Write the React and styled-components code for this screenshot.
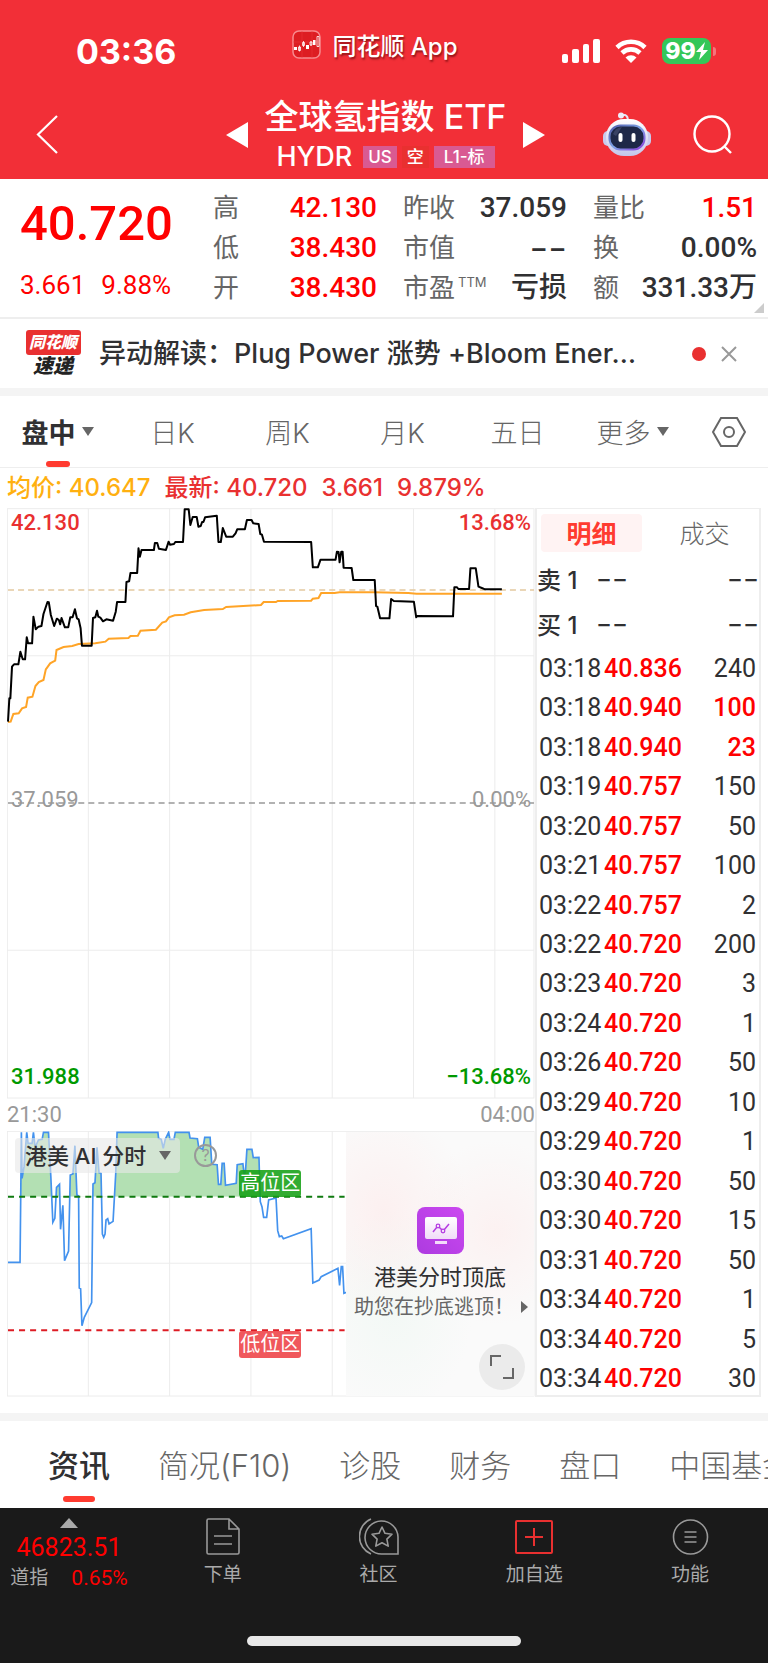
import React, { useState } from "react";
import styled, { createGlobalStyle, ThemeProvider } from "styled-components";

const theme = {
  brand: "#f22f37",
  accent: "#ff3b30",
  up: "#ff0000",
  upSoft: "#e93030",
  down: "#009900",
  ink: "#303032",
  muted: "#666666",
  faint: "#999999",
  line: "#eeeeee",
  band: "#f4f4f4",
  average: "#ffb010",
  bar: "#1a1a1a",
  text: '"Inter", "Noto Sans CJK SC", sans-serif',
  digits: '"Roboto", "Noto Sans CJK SC", sans-serif',
};

const GlobalStyle = createGlobalStyle`
  * { box-sizing: border-box; }
  body {
    margin: 0;
    background: #fff;
    font-family: ${theme.text};
    color: ${theme.ink};
    overflow-x: hidden;
  }
  button, select {
    margin: 0;
    padding: 0;
    border: 0;
    background: none;
    font: inherit;
    color: inherit;
    white-space: nowrap;
  }
  svg { display: block; flex-shrink: 0; }
  dl, dd, dt, h1, p { margin: 0; }
`;

/* ---------- header ---------- */

const Header = styled.header`
  background: ${props => props.theme.brand};
  color: #fff;
`;

const StatusBar = styled.div`
  display: grid;
  grid-template-columns: 1fr auto 1fr;
  align-items: center;
  height: 90px;
  padding: 12px 52px 0 34px;
`;

const Clock = styled.time`
  padding-left: 42px;
  font-size: 34px;
  font-weight: 700;
`;

const AppChip = styled.div`
  display: flex;
  align-items: center;
  gap: 11px;
  padding-bottom: 14px;
  font-size: 24px;
  font-weight: 500;
  text-shadow: 1px 2px 2px rgba(80, 0, 0, 0.6);
`;

const StatusIcons = styled.div`
  display: flex;
  justify-content: flex-end;
  align-items: center;
  gap: 15px;
`;

const Battery = styled.div`
  display: flex;
  align-items: center;
  gap: 2px;
`;

const BatteryLevel = styled.span`
  display: flex;
  align-items: center;
  justify-content: center;
  width: 49px;
  height: 26px;
  border-radius: 8px;
  background: #34c759;
  font-size: 23px;
  font-weight: 800;
`;

const BatteryTip = styled.span`
  width: 3px;
  height: 9px;
  border-radius: 0 3px 3px 0;
  background: #f5757b;
`;

const NavBar = styled.div`
  display: grid;
  grid-template-columns: 1fr auto 1fr;
  align-items: center;
  height: 89px;
  padding: 0 36px;
`;

const TitleGroup = styled.div`
  display: flex;
  align-items: center;
  gap: 17px;
  padding-left: 3px;
`;

const Title = styled.h1`
  font-size: 34px;
  font-weight: 500;
  line-height: 46px;
  text-align: center;
  white-space: nowrap;
`;

const SubTitle = styled.div`
  display: flex;
  align-items: center;
  justify-content: center;
  gap: 5px;
  height: 36px;
  padding-bottom: 2px;
  font-size: 27px;
  font-weight: 500;
`;

const Tag = styled.span`
  padding: 0 ${props => (props.$wide ? "10px" : "5px")};
  background: ${props => (props.$plain ? "#e93030" : "#d95a92")};
  font-size: 17px;
  line-height: 22px;
`;

const Code = styled.span`
  padding-right: 6px;
`;

const NavActions = styled.div`
  display: flex;
  justify-content: flex-end;
  align-items: center;
  gap: 42px;
`;

/* ---------- quote ---------- */

const Quote = styled.section`
  position: relative;
  display: grid;
  grid-template-columns: 167px repeat(3, 1fr);
  gap: 26px;
  height: 140px;
  padding: 9px 11px 0 20px;
  border-bottom: 2px solid ${props => props.theme.line};
`;

const Price = styled.div`
  font-family: ${props => props.theme.digits};
  font-size: 49px;
  font-weight: 500;
  line-height: 72px;
  color: ${props => props.theme.up};
`;

const Change = styled.div`
  display: flex;
  gap: 16px;
  font-family: ${props => props.theme.digits};
  font-size: 26px;
  line-height: 50px;
  color: ${props => props.theme.up};
`;

const Facts = styled.dl`
  min-width: 0;
`;

const Fact = styled.div`
  display: flex;
  justify-content: space-between;
  line-height: 40px;
  white-space: nowrap;

  dt {
    font-size: 26px;
    color: ${props => props.theme.muted};
  }
  dd {
    font-family: ${props => (props.$empty ? props.theme.text : props.theme.digits)};
    font-size: 28px;
    font-weight: 500;
    color: ${props => (props.$up ? props.theme.up : props.theme.ink)};
  }
  sup {
    padding-left: 3px;
    font-size: 13px;
    line-height: 13px;
  }
`;

const Corner = styled.span`
  position: absolute;
  right: 4px;
  bottom: 4px;
  border-left: 10px solid transparent;
  border-bottom: 10px solid #ccc;
`;

/* ---------- news ---------- */

const News = styled.section`
  display: flex;
  align-items: center;
  height: 77px;
  padding: 0 31px 0 24px;
  border-bottom: 8px solid ${props => props.theme.band};
`;

const NewsLogo = styled.div`
  display: flex;
  flex-direction: column;
  align-items: center;
  width: 58px;
  font-style: italic;
  font-weight: 900;
  color: #222;
  font-size: 20px;
  line-height: 22px;
`;

const NewsBadge = styled.span`
  width: 55px;
  border-radius: 3px;
  background: ${props => props.theme.upSoft};
  color: #fff;
  font-size: 16px;
  line-height: 25px;
  text-align: center;
`;

const NewsText = styled.a`
  flex: 1;
  min-width: 0;
  padding: 0 0 4px 17px;
  color: inherit;
  font-size: 27px;
  font-weight: 500;
  text-decoration: none;
  white-space: nowrap;
`;

const Dot = styled.span`
  width: 14px;
  height: 14px;
  margin-right: 15px;
  border-radius: 50%;
  background: ${props => props.theme.upSoft};
`;

/* ---------- period tabs ---------- */

const Periods = styled.nav`
  display: grid;
  grid-template-columns: repeat(6, 1fr) 78px;
  height: 72px;
  border-bottom: 1px solid ${props => props.theme.line};
`;

const Period = styled.button`
  position: relative;
  display: flex;
  align-items: center;
  justify-content: center;
  gap: 6px;
  color: ${props => (props.$active ? props.theme.ink : props.theme.muted)};
  font-size: 27px;
  font-weight: ${props => (props.$active ? 700 : 300)};

  &::after {
    content: "";
    display: ${props => (props.$active ? "block" : "none")};
    position: absolute;
    left: 40%;
    bottom: 0;
    width: 24px;
    height: 6px;
    border-radius: 3px;
    background: ${props => props.theme.accent};
  }
`;

const Summary = styled.div`
  display: flex;
  gap: 14px;
  height: 40px;
  padding: 0 7px;
  font-size: 24px;
  font-weight: 500;
  line-height: 40px;
  color: ${props => props.theme.upSoft};
`;

const Average = styled.span`
  color: ${props => props.theme.average};
`;

/* ---------- charts ---------- */

const Market = styled.main`
  display: flex;
  height: 913px;
  padding: 0 7px;
  border-bottom: 8px solid ${props => props.theme.band};
`;

const Charts = styled.div`
  flex: 1;
  min-width: 0;
`;

const Plot = styled.div`
  position: relative;
  height: ${props => props.$height};

  > svg {
    width: 100%;
    height: 100%;
  }
`;

const Label = styled.span`
  position: absolute;
  ${props => props.$side}: 4px;
  ${props => props.$at};
  font-family: ${props => props.theme.digits};
  font-size: 22px;
  font-weight: ${props => (props.$tone === "faint" ? 400 : 500)};
  line-height: 28px;
  color: ${props => props.theme[props.$tone]};
`;

const TimeAxis = styled.div`
  display: flex;
  justify-content: space-between;
  height: 32px;
  font-family: ${props => props.theme.digits};
  font-size: 22px;
  line-height: 32px;
  color: ${props => props.theme.faint};
`;

const Picker = styled.label`
  position: absolute;
  left: 8px;
  top: 7px;
  display: flex;
  align-items: center;
  width: 165px;
  height: 35px;
  padding: 0 9px 0 10px;
  border-radius: 4px;
  background: rgba(232, 232, 232, 0.6);
  font-size: 22px;
  font-weight: 500;

  select {
    flex: 1;
    appearance: none;
    outline: none;
  }
`;

const Help = styled.button`
  position: absolute;
  left: 187px;
  top: 13px;
  width: 23px;
  height: 23px;
  border: 2px solid ${props => props.theme.faint};
  border-radius: 50%;
  color: ${props => props.theme.faint};
  font-size: 16px;
  line-height: 19px;
`;

const Zone = styled.span`
  position: absolute;
  left: 44%;
  top: ${props => props.$top};
  width: 62px;
  border-radius: 3px;
  background: ${props => (props.$high ? "rgba(20, 160, 20, 0.87)" : "rgba(238, 70, 74, 0.9)")};
  color: #fff;
  font-size: 20px;
  line-height: 27px;
  text-align: center;
`;

const Promo = styled.aside`
  position: absolute;
  top: 1px;
  right: 1px;
  bottom: 1px;
  display: flex;
  flex-direction: column;
  align-items: center;
  width: 188px;
  padding-top: 75px;
  background:
    radial-gradient(ellipse at 20% 30%, rgba(255, 228, 228, 0.45), transparent 40%),
    radial-gradient(ellipse at 80% 38%, rgba(255, 228, 228, 0.4), transparent 40%),
    radial-gradient(ellipse at 25% 68%, rgba(232, 246, 238, 0.4), transparent 40%),
    #fafafa;
`;

const PromoTitle = styled.p`
  padding-top: 6px;
  font-size: 22px;
  line-height: 34px;
`;

const PromoLink = styled.a`
  display: flex;
  align-items: center;
  justify-content: space-between;
  align-self: stretch;
  padding: 0 6px 0 8px;
  color: ${props => props.theme.muted};
  font-size: 20px;
  line-height: 26px;
  text-decoration: none;
  white-space: nowrap;
`;

const Expand = styled.button`
  position: absolute;
  right: 9px;
  bottom: 6px;
  display: grid;
  place-items: center;
  width: 46px;
  height: 46px;
  border-radius: 50%;
  background: #ebebeb;
`;

/* ---------- trades ---------- */

const Trades = styled.div`
  width: 226px;
  height: 889px;
  border: 2px solid ${props => props.theme.line};
  border-top-width: 1px;
`;

const TradeTabs = styled.div`
  display: flex;
  gap: 12px;
  padding: 5px 4px;
`;

const TradeTab = styled.button`
  flex: 1;
  height: 38px;
  padding-bottom: 4px;
  border-radius: 4px;
  background: ${props => (props.$active ? "#fff3f3" : "transparent")};
  color: ${props => (props.$active ? props.theme.accent : props.theme.muted)};
  font-size: 25px;
  font-weight: ${props => (props.$active ? 700 : 300)};
`;

const Book = styled.table`
  width: 100%;
  border-collapse: collapse;
  font-size: 24px;
  font-weight: 500;

  td {
    height: 45px;
    padding: 0 0 2px;
  }
  td:first-child {
    width: 59px;
  }
  td:last-child {
    text-align: right;
  }
`;

const Ticks = styled.table`
  width: 100%;
  height: 750px;
  border-collapse: collapse;
  font-family: ${props => props.theme.digits};
  font-size: 25px;
  line-height: 30px;

  td {
    padding: 4px 0 0;
  }
  td:first-child {
    width: 67px;
    padding-left: 2px;
  }
  td:last-child {
    padding-right: 3px;
    text-align: right;
  }
`;

const Deal = styled.td`
  color: ${props => props.theme.up};
  font-weight: 500;
`;

const Volume = styled.td`
  color: ${props => (props.$up ? props.theme.up : props.theme.ink)};
  font-weight: ${props => (props.$up ? 500 : 400)};
`;

/* ---------- bottom ---------- */

const Sections = styled.nav`
  display: flex;
  gap: 48px;
  height: 87px;
  padding-left: 48px;
  overflow: hidden;
`;

const Section = styled.button`
  position: relative;
  flex-shrink: 0;
  padding-bottom: 3px;
  color: ${props => (props.$active ? props.theme.ink : props.theme.muted)};
  font-size: 31px;
  font-weight: ${props => (props.$active ? 500 : 300)};

  &::after {
    content: "";
    display: ${props => (props.$active ? "block" : "none")};
    position: absolute;
    left: 15px;
    bottom: 6px;
    width: 32px;
    height: 6px;
    border-radius: 3px;
    background: ${props => props.theme.accent};
  }
`;

const Toolbar = styled.footer`
  display: grid;
  grid-template-columns: 145px repeat(4, 1fr);
  height: 155px;
  background: ${props => props.theme.bar};
  color: #aaa;
`;

const IndexButton = styled.button`
  display: flex;
  flex-direction: column;
  align-items: center;
  height: 85px;
  padding: 10px 7px 0 0;
  font-family: ${props => props.theme.digits};
`;

const IndexValue = styled.span`
  padding-top: 5px;
  color: ${props => props.theme.up};
  font-size: 25px;
  line-height: 30px;
`;

const IndexRow = styled.span`
  display: flex;
  gap: 23px;
  font-size: 19px;
  line-height: 30px;

  em {
    color: ${props => props.theme.up};
    font-size: 21px;
    font-style: normal;
  }
`;

const Tool = styled.button`
  display: flex;
  flex-direction: column;
  align-items: center;
  height: 85px;
  padding-top: 10px;
  font-size: 19px;
  line-height: 40px;
`;

const HomeBar = styled.span`
  grid-column: 1 / -1;
  justify-self: center;
  align-self: end;
  width: 274px;
  height: 10px;
  margin-bottom: 17px;
  border-radius: 5px;
  background: #e8e8e8;
`;

/* ---------- data ---------- */

const EMPTY = "−−";

const facts = [
  [["高", "42.130", true], ["低", "38.430", true], ["开", "38.430", true]],
  [["昨收", "37.059"], ["市值", EMPTY], ["市盈", "亏损", false, "TTM"]],
  [["量比", "1.51", true], ["换", "0.00%"], ["额", "331.33万"]],
];

const ticks = [
  ["03:18", "40.836", 240],
  ["03:18", "40.940", 100, true],
  ["03:18", "40.940", 23, true],
  ["03:19", "40.757", 150],
  ["03:20", "40.757", 50],
  ["03:21", "40.757", 100],
  ["03:22", "40.757", 2],
  ["03:22", "40.720", 200],
  ["03:23", "40.720", 3],
  ["03:24", "40.720", 1],
  ["03:26", "40.720", 50],
  ["03:29", "40.720", 10],
  ["03:29", "40.720", 1],
  ["03:30", "40.720", 50],
  ["03:30", "40.720", 15],
  ["03:31", "40.720", 50],
  ["03:34", "40.720", 1],
  ["03:34", "40.720", 5],
  ["03:34", "40.720", 30],
];

const pricePoints =
  "24,995 28,925 31,925 36,830 42,823 55,823 61,785 68,808 75,808 80,742 84,760 96,760 100,680 107,718 115,710 124,708 130,672 142,636 146,637 152,675 162,708 170,686 176,690 180,703 184,684 194,712 204,712 210,682 217,682 224,658 230,685 235,688 241,715 245,767 274,767 278,684 285,682 290,662 294,680 300,683 308,694 318,688 338,692 346,665 350,636 375,636 378,576 386,574 390,549 410,549 414,475 418,500 423,480 460,480 463,459 470,459 475,476 496,480 504,455 508,464 520,462 524,456 547,456 552,358 564,358 569,405 576,381 588,381 593,410 600,408 604,396 608,396 613,382 648,377 653,456 660,456 666,414 676,440 696,440 704,430 709,418 732,418 738,390 752,390 757,400 773,402 778,432 783,434 789,455 930,456 935,532 950,532 958,509 1003,509 1007,485 1012,486 1015,517 1020,485 1024,485 1027,533 1051,534 1056,570 1120,570 1124,648 1128,650 1136,685 1164,685 1169,627 1177,633 1237,635 1244,682 1246,678 1354,679 1358,592 1366,592 1370,597 1402,597 1406,535 1422,535 1430,590 1440,594 1450,598 1500,598";

const averagePoints =
  "24,996 32,995 40,972 56,970 66,955 78,951 83,923 97,920 106,888 116,876 130,870 137,838 150,820 165,812 169,780 190,771 216,768 235,762 285,760 315,755 325,746 384,744 390,738 412,737 420,722 466,719 485,698 496,694 505,682 522,676 550,674 570,667 610,660 666,657 676,651 780,645 788,636 825,636 830,633 930,632 935,626 952,624 960,609 1000,609 1015,607 1120,607 1220,609 1245,611 1500,611";

const signalPoints =
  "24,607 60,607 64,217 66,355 72,320 80,217 84,250 96,250 100,217 105,262 115,240 126,238 130,217 145,217 152,350 158,487 164,475 169,382 178,373 181,508 188,436 193,602 205,573 210,345 218,342 224,257 230,405 235,408 237,684 241,686 245,797 252,772 274,728 278,372 284,368 290,262 296,338 302,340 306,522 310,532 314,522 317,480 322,476 326,492 338,484 346,340 350,217 472,217 474,235 482,238 488,265 494,238 504,217 508,238 520,238 524,217 565,217 568,234 590,236 594,262 606,268 612,232 628,232 633,313 649,314 653,373 660,373 664,310 670,310 674,376 706,370 709,314 726,311 730,345 734,330 738,268 753,268 757,293 774,292 778,425 783,440 788,472 797,472 803,420 825,414 830,512 835,530 842,528 847,536 930,506 935,669 954,660 960,650 1010,625 1015,676 1020,620 1024,620 1028,700 1036,697";

const columns = [264, 507, 750, 993, 1236, 1479];

/* ---------- icons ---------- */

const Caret = () => (
  <svg width="12" height="9" viewBox="0 0 12 9"><path d="M0 0h12L6 9z" fill="#666" /></svg>
);

const AppIcon = () => (
  <svg width="29" height="29" viewBox="0 0 29 29">
    <rect x="1" y="1" width="27" height="27" rx="6" fill="#dd1d22" stroke="#f78a8e" strokeWidth="1.5" />
    <path d="M1 12h27M10 1v27M20 1v27" stroke="#ee3a3f" strokeWidth=".5" />
    <path d="M2 17h3v3H2zM14 15h3v4h-3zM21 10h2.500v5H21z" fill="#fff" />
    <path d="M6.500 17h2v3.500h-2zM10.500 12.500h2v3h-2zM18 12h2v3h-2zM25 6.500h2v10h-2zM7.500 15.500v6M11.500 11v6M19 11v5" fill="none" stroke="#fff" strokeWidth=".8" />
  </svg>
);

const Signal = () => (
  <svg width="38" height="24" viewBox="0 0 38 24" fill="#fff">
    <rect x="0" y="15" width="6" height="9" rx="2" />
    <rect x="10" y="10" width="7" height="14" rx="2" />
    <rect x="21" y="5" width="6" height="19" rx="2" />
    <rect x="31" y="0" width="7" height="24" rx="2" />
  </svg>
);

const Wifi = () => (
  <svg width="32" height="24" viewBox="0 0 32 24">
    <path d="M2 8.500a20 20 0 0 1 28 0M7 14a13 13 0 0 1 18 0" fill="none" stroke="#fff" strokeWidth="4.600" />
    <path d="M10.500 18.500a8 8 0 0 1 11 0L16 24z" fill="#fff" />
  </svg>
);

const Bolt = () => (
  <svg width="12" height="18" viewBox="0 0 12 18"><path d="M9 0L0 10h5L3 18l9-10H7z" fill="#fff" /></svg>
);

const Robot = () => (
  <svg width="48" height="45" viewBox="0 0 48 45">
    <defs>
      <linearGradient id="shell" x1="0" y1="0" x2="0" y2="1">
        <stop offset="0" stopColor="#fff" />
        <stop offset="1" stopColor="#c3c5ea" />
      </linearGradient>
      <linearGradient id="rim" x1="0" y1="0" x2="1" y2="1">
        <stop offset="0" stopColor="#4e58a8" />
        <stop offset=".5" stopColor="#7fa5e8" />
        <stop offset="1" stopColor="#8b3bd8" />
      </linearGradient>
    </defs>
    <path d="M18 3h4q3 1 3 6" fill="none" stroke="#e4e4f4" strokeWidth="2" />
    <circle cx="18" cy="3.500" r="3" fill="#eeeefa" />
    <rect x="0" y="19" width="10" height="15" rx="5" fill="#c9cbed" />
    <rect x="38" y="19" width="10" height="15" rx="5" fill="#c9cbed" />
    <rect x="3" y="7" width="42" height="37" rx="18" fill="url(#shell)" />
    <rect x="6.500" y="13.500" width="35" height="24" rx="11" fill="#1e2848" stroke="url(#rim)" strokeWidth="2" />
    <path d="M10 22q2-6 9-7l-6 9z" fill="#4a5478" opacity=".6" />
    <rect x="15.500" y="21" width="4" height="9" rx="2" fill="#fff" />
    <rect x="28.500" y="21" width="4" height="9" rx="2" fill="#fff" />
  </svg>
);

const ChartIcon = () => (
  <svg width="47" height="47" viewBox="0 0 47 47">
    <defs>
      <linearGradient id="violet" x1="0" y1="1" x2="1" y2="0">
        <stop offset="0" stopColor="#ad3be0" />
        <stop offset="1" stopColor="#cb48f0" />
      </linearGradient>
      <linearGradient id="screen" x1="0" y1="0" x2="0" y2="1">
        <stop offset="0" stopColor="#fff" />
        <stop offset="1" stopColor="#f0dcf8" />
      </linearGradient>
    </defs>
    <rect width="47" height="47" rx="8" fill="url(#violet)" />
    <rect x="8" y="10" width="32" height="22" rx="2" fill="url(#screen)" />
    <rect x="18" y="34" width="12" height="3" fill="#f3dcfa" />
    <path d="M16 25l4-5M22 20l3 3M27 23l5-6" stroke="#b53ee2" strokeWidth="1.500" />
    <circle cx="21" cy="19" r="1.800" fill="none" stroke="#b53ee2" strokeWidth="1.300" />
    <circle cx="26" cy="24" r="1.800" fill="none" stroke="#b53ee2" strokeWidth="1.300" />
  </svg>
);

const OrderIcon = () => (
  <svg width="34" height="37" viewBox="0 0 34 37" fill="none" stroke="#999" strokeWidth="1.600">
    <path d="M1 2.500Q1 1 2.500 1H23l10 10v23.500q0 1.500-1.500 1.500h-29Q1 36 1 34.500zM23 1v10h10M8 18h18M8 26h18" />
  </svg>
);

const ClubIcon = () => (
  <svg width="40" height="37" viewBox="0 0 40 37" fill="none" stroke="#999" strokeWidth="1.600">
    <path d="M12 1a19 19 0 0 0 0 35M39 19v17H23a16.500 16.500 0 1 1 16-17z" />
    <path d="M23 9l3 6.300 7 .9-5.100 4.900 1.300 7L23 24.700l-6.200 3.400 1.300-7-5.100-4.900 7-.9z" strokeLinejoin="round" />
  </svg>
);

const AddIcon = () => (
  <svg width="38" height="37" viewBox="0 0 38 37" fill="none" stroke="#e93030" strokeWidth="2">
    <rect x="1" y="3" width="36" height="32" rx="1" />
    <path d="M10 19h18M19 10v18" />
  </svg>
);

const MenuIcon = () => (
  <svg width="37" height="37" viewBox="0 0 37 37" fill="none" stroke="#999" strokeWidth="1.600">
    <circle cx="18.500" cy="19" r="17" />
    <path d="M12.500 14h12M12.500 19h12M12.500 24h12" />
  </svg>
);

const Grid = ({ top, bottom, rows }) => (
  <g stroke="#ececec" strokeWidth="3" fill="none">
    <rect x="22" y={top} width="1574" height={bottom - top} />
    {columns.map(x => <path key={x} d={`M${x} ${top}V${bottom}`} />)}
    {rows.map(y => <path key={y} d={`M22 ${y}H1596`} />)}
  </g>
);

function PriceChart() {
  return (
    <Plot $height="591px">
      <svg viewBox="21 354 1578 1773" preserveAspectRatio="none">
        <Grid top={356} bottom={2124} rows={[797, 1681]} />
        <path d="M24 1239H1596" stroke="#999" strokeWidth="4" strokeDasharray="18 12" />
        <path d="M24 600H1596" stroke="#e3c9a0" strokeWidth="5" strokeDasharray="18 12" />
        <polyline points={averagePoints} fill="none" stroke="#ffa427" strokeWidth="6" />
        <polyline points={pricePoints} fill="none" stroke="#000" strokeWidth="6" strokeLinejoin="round" />
      </svg>
      <Label $side="left" $at="top: 1px" $tone="upSoft">42.130</Label>
      <Label $side="right" $at="top: 1px" $tone="upSoft">13.68%</Label>
      <Label $side="left" $at="top: 278px" $tone="faint">37.059</Label>
      <Label $side="right" $at="top: 278px" $tone="faint">0.00%</Label>
      <Label $side="left" $at="bottom: 8px" $tone="down">31.988</Label>
      <Label $side="right" $at="bottom: 8px" $tone="down">−13.68%</Label>
    </Plot>
  );
}

function SignalChart() {
  return (
    <Plot $height="266px">
      <svg viewBox="21 213 1578 798" preserveAspectRatio="none">
        <defs>
          <clipPath id="high"><rect x="62" y="213" width="714" height="197" /></clipPath>
        </defs>
        <Grid top={214} bottom={1008} rows={[610]} />
        <polygon points={`24,410 ${signalPoints} 1036,410`} fill="#b3e0b3" clipPath="url(#high)" />
        <polyline points={signalPoints} fill="none" stroke="#4392ee" strokeWidth="5" />
        <path d="M24 410H1030" stroke="#0f7a0f" strokeWidth="6" strokeDasharray="18 15" />
        <path d="M24 811H1030" stroke="#dd1c24" strokeWidth="6" strokeDasharray="18 15" />
      </svg>
      <Picker>
        <select aria-label="指标"><option>港美 AI 分时</option></select>
        <Caret />
      </Picker>
      <Help>?</Help>
      <Zone $top="39px" $high>高位区</Zone>
      <Zone $top="200px">低位区</Zone>
      <Promo>
        <ChartIcon />
        <PromoTitle>港美分时顶底</PromoTitle>
        <PromoLink href="#signal">
          助您在抄底逃顶！
          <svg width="7" height="12" viewBox="0 0 7 12"><path d="M0 0l7 6-7 6z" fill="#666" /></svg>
        </PromoLink>
        <Expand aria-label="全屏">
          <svg width="24" height="24" viewBox="0 0 24 24" fill="none" stroke="#666" strokeWidth="2">
            <path d="M1 11V1h10M23 13v10H13" />
          </svg>
        </Expand>
      </Promo>
    </Plot>
  );
}

function TradeList() {
  const [tab, setTab] = useState("明细");
  return (
    <Trades>
      <TradeTabs>
        {["明细", "成交"].map(name => (
          <TradeTab key={name} $active={tab === name} onClick={() => setTab(name)}>{name}</TradeTab>
        ))}
      </TradeTabs>
      <Book>
        <tbody>
          <tr><td>卖 1</td><td>{EMPTY}</td><td>{EMPTY}</td></tr>
          <tr><td>买 1</td><td>{EMPTY}</td><td>{EMPTY}</td></tr>
        </tbody>
      </Book>
      <Ticks>
        <tbody>
          {ticks.map(([time, price, volume, up], i) => (
            <tr key={i}>
              <td>{time}</td>
              <Deal>{price}</Deal>
              <Volume $up={up}>{volume}</Volume>
            </tr>
          ))}
        </tbody>
      </Ticks>
    </Trades>
  );
}

export default function App() {
  const [period, setPeriod] = useState("盘中");
  const [section, setSection] = useState("资讯");

  return (
    <ThemeProvider theme={theme}>
      <GlobalStyle />
      <Header>
        <StatusBar>
          <Clock>03:36</Clock>
          <AppChip><AppIcon />同花顺 App</AppChip>
          <StatusIcons>
            <Signal />
            <Wifi />
            <Battery>
              <BatteryLevel>99<Bolt /></BatteryLevel>
              <BatteryTip />
            </Battery>
          </StatusIcons>
        </StatusBar>
        <NavBar>
          <button aria-label="返回">
            <svg width="22" height="39" viewBox="0 0 22 39"><path d="M21 1L2 19.500 21 38" fill="none" stroke="#fff" strokeWidth="2.200" /></svg>
          </button>
          <TitleGroup>
            <button aria-label="上一只">
              <svg width="22" height="26" viewBox="0 0 22 26"><path d="M22 0v26L0 13z" fill="#fff" /></svg>
            </button>
            <div>
              <Title>全球氢指数 ETF</Title>
              <SubTitle>
                <Code>HYDR</Code>
                <Tag>US</Tag>
                <Tag $plain>空</Tag>
                <Tag $wide>L1-标</Tag>
              </SubTitle>
            </div>
            <button aria-label="下一只">
              <svg width="22" height="26" viewBox="0 0 22 26"><path d="M0 0v26l22-13z" fill="#fff" /></svg>
            </button>
          </TitleGroup>
          <NavActions>
            <button aria-label="助手"><Robot /></button>
            <button aria-label="搜索">
              <svg width="39" height="39" viewBox="0 0 39 39" fill="none" stroke="#fff" strokeWidth="2.400">
                <circle cx="19" cy="19" r="17.500" />
                <path d="M31 31l7 7" />
              </svg>
            </button>
          </NavActions>
        </NavBar>
      </Header>

      <Quote>
        <div>
          <Price>40.720</Price>
          <Change><span>3.661</span><span>9.88%</span></Change>
        </div>
        {facts.map((group, i) => (
          <Facts key={i}>
            {group.map(([name, value, up, note]) => (
              <Fact key={name} $up={up} $empty={value === EMPTY}>
                <dt>{name}{note && <sup>{note}</sup>}</dt>
                <dd>{value}</dd>
              </Fact>
            ))}
          </Facts>
        ))}
        <Corner />
      </Quote>

      <News>
        <NewsLogo><NewsBadge>同花顺</NewsBadge>速递</NewsLogo>
        <NewsText href="#news">异动解读：Plug Power 涨势 +Bloom Ener…</NewsText>
        <Dot />
        <button aria-label="关闭">
          <svg width="16" height="16" viewBox="0 0 16 16"><path d="M1 1l14 14M15 1L1 15" stroke="#999" strokeWidth="2" /></svg>
        </button>
      </News>

      <Periods>
        {["盘中", "日K", "周K", "月K", "五日", "更多"].map(name => (
          <Period key={name} $active={period === name} onClick={() => setPeriod(name)}>
            {name}
            {(name === "盘中" || name === "更多") && <Caret />}
          </Period>
        ))}
        <Period aria-label="设置">
          <svg width="34" height="30" viewBox="0 0 34 30" fill="none" stroke="#666" strokeWidth="2">
            <path d="M9 1h16l8 14-8 14H9L1 15z" />
            <circle cx="17" cy="15" r="5" />
          </svg>
        </Period>
      </Periods>
      <Summary>
        <Average>均价: 40.647</Average>
        <span>最新: 40.720</span>
        <span>3.661</span>
        <span>9.879%</span>
      </Summary>

      <Market>
        <Charts>
          <PriceChart />
          <TimeAxis><span>21:30</span><span>04:00</span></TimeAxis>
          <SignalChart />
        </Charts>
        <TradeList />
      </Market>

      <Sections>
        {["资讯", "简况(F10)", "诊股", "财务", "盘口", "中国基金"].map(name => (
          <Section key={name} $active={section === name} onClick={() => setSection(name)}>{name}</Section>
        ))}
      </Sections>

      <Toolbar>
        <IndexButton>
          <svg width="18" height="10" viewBox="0 0 18 10"><path d="M9 0l9 10H0z" fill="#aaa" /></svg>
          <IndexValue>46823.51</IndexValue>
          <IndexRow>道指<em>0.65%</em></IndexRow>
        </IndexButton>
        <Tool><OrderIcon />下单</Tool>
        <Tool><ClubIcon />社区</Tool>
        <Tool><AddIcon />加自选</Tool>
        <Tool><MenuIcon />功能</Tool>
        <HomeBar />
      </Toolbar>
    </ThemeProvider>
  );
}
